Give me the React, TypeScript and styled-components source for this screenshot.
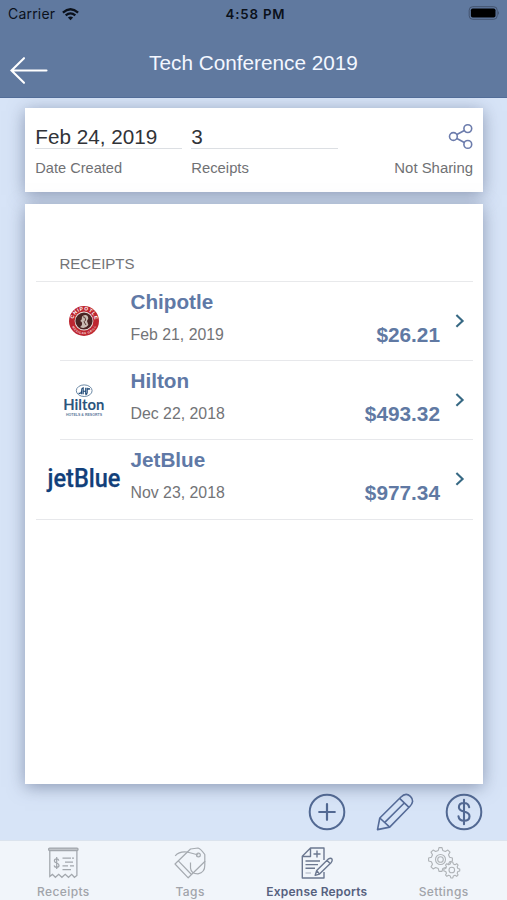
import React from 'react';
import styled, { createGlobalStyle } from 'styled-components';

const GlobalStyle = createGlobalStyle`
  * { box-sizing: border-box; }
  html, body, #root { height: 100%; margin: 0; }
  body { overflow: hidden; font-family: "Liberation Sans", Arial, sans-serif; }
  svg { display: block; flex: none; overflow: visible; }
`;

const Screen = styled.div`
  width: 507px;
  height: 900px;
  display: flex;
  flex-direction: column;
  background: #d7e4f7;
`;

const Header = styled.header`
  height: 98px;
  flex: none;
  background: #60799f;
  border-bottom: 1px solid #526d98;
`;

const StatusBar = styled.div`
  height: 28px;
  padding: 0 7px 0 8px;
  display: grid;
  grid-template-columns: 1fr auto 1fr;
  align-items: center;
  font: 400 14px/28px Inter, sans-serif;
  color: #0b111b;
`;

const Carrier = styled.div`
  display: flex;
  align-items: center;
  gap: 7px;
  letter-spacing: 0.2px;
`;

const Clock = styled.div`
  font-size: 13.3px;
  font-weight: 600;
  letter-spacing: 0.8px;
  padding-left: 3px;
`;

const Battery = styled.div`
  justify-self: end;
  padding-bottom: 2px;
`;

const TitleBar = styled.div`
  height: 69px;
  display: grid;
  grid-template-columns: 48px 1fr 48px;
`;

const BackButton = styled.button`
  align-self: start;
  border: 0;
  padding: 28px 0 0 10px;
  background: none;
  display: block;
`;

const Title = styled.h1`
  margin: 0;
  padding-top: 23px;
  text-align: center;
  font-size: 20.75px;
  line-height: 24px;
  font-weight: 400;
  color: #f3f7ff;
`;

const Main = styled.main`
  flex: 1;
  padding: 10px 24px 0 25px;
  display: flex;
  flex-direction: column;
  overflow: hidden;
`;

const Card = styled.section`
  background: #fff;
  box-shadow: 0 3px 16px rgba(78, 91, 124, 0.55);
`;

const SummaryCard = styled(Card)`
  height: 84px;
  flex: none;
  margin-bottom: 12px;
  padding: 15px 10px 0;
  display: flex;
`;

const Field = styled.div<{ $gap: number }>`
  width: 147px;
  margin-right: ${(p) => p.$gap}px;
`;

const FieldValue = styled.div`
  height: 26px;
  padding-left: 0.3px;
  font-size: 20.7px;
  line-height: 28px;
  color: #313338;
  border-bottom: 1px solid #dcdfe3;
`;

const FieldLabel = styled.div<{ $size?: number }>`
  padding: 9px 0 0 0.3px;
  font-size: ${(p) => p.$size ?? 14.6}px;
  line-height: 20px;
  white-space: nowrap;
  color: #707174;
`;

const Sharing = styled.div`
  flex: 1;
  display: flex;
  flex-direction: column;
  align-items: flex-end;

  svg { height: 26px; }
`;

const ReceiptsCard = styled(Card)`
  position: relative;
  height: 580px;
  flex: none;
  padding: 49px 10px 0 11px;
`;

const SectionTitle = styled.h2`
  margin: 0;
  height: 29px;
  padding-left: 23.5px;
  border-bottom: 1px solid #e8e9eb;
  font-size: 15px;
  line-height: 21px;
  font-weight: 400;
  color: #737477;
`;

const ReceiptRow = styled.div`
  height: 79.2px;
  display: grid;
  grid-template-columns: 94.5px 1fr auto 33px;
`;

const Logo = styled.div`
  padding-left: 11px;
`;

const Details = styled.div`
  padding-top: 8px;
`;

const Merchant = styled.div`
  font-size: 20.7px;
  line-height: 24px;
  font-weight: 700;
  color: #6079a6;
`;

const ReceiptDate = styled.div`
  padding-top: 10.7px;
  font-size: 15.85px;
  line-height: 20px;
  color: #737477;
`;

const Amount = styled.div`
  padding-top: 41px;
  font-size: 20.8px;
  line-height: 24px;
  font-weight: 700;
  color: #6079a3;
`;

const Chevron = styled.div`
  padding: 31px 0 0 15px;
`;

const Divider = styled.hr<{ $inset: number }>`
  border: 0;
  height: 1px;
  margin: -1px 0 0 ${(p) => p.$inset}px;
  background: #e7e8eb;
`;

const Actions = styled.div`
  height: 57px;
  display: flex;
  justify-content: flex-end;
  gap: 31px;
  padding-top: 9px;
`;

const TabBar = styled.nav`
  height: 60px;
  flex: none;
  display: grid;
  grid-template-columns: repeat(4, 1fr);
  background: #f1f5fa;
  border-top: 1px solid #dbe3ed;
`;

const Tab = styled.div<{ $active?: boolean }>`
  display: flex;
  flex-direction: column;
  align-items: center;
  padding-top: 5px;
  white-space: nowrap;
  font: ${(p) => (p.$active ? 600 : 500)} 12px/16px Inter, sans-serif;
  letter-spacing: ${(p) => (p.$active ? 0.2 : 0.4)}px;
  color: ${(p) => (p.$active ? '#56617f' : '#a1a4aa')};

  svg { margin-bottom: 4px; }
`;

const WifiIcon = () => (
  <svg width="17" height="13" viewBox="0 0 17 13" fill="none" stroke="currentColor" strokeWidth="2.3">
    <path d="M.9 4.6Q8.5-2 16.1 4.6M3.7 7.4Q8.5 3.3 13.3 7.4" />
    <path d="M8.5 12.2 5.9 9.5Q8.5 7.4 11.1 9.5Z" fill="currentColor" stroke="none" />
  </svg>
);

const BatteryIcon = () => (
  <svg width="32" height="14" viewBox="0 0 32 14">
    <rect x="1.2" y=".7" width="28" height="12.6" rx="3.5" fill="none" stroke="#43536e" />
    <rect x="2.9" y="2.5" width="24.6" height="9" rx="1.8" fill="#000" />
    <path d="M30.2 4.8Q31.8 7 30.2 9.2Z" fill="#38475f" />
  </svg>
);

const BackIcon = () => (
  <svg width="38" height="28" viewBox="0 0 38 28" fill="none" stroke="#fff" strokeWidth="2.1" strokeLinecap="round">
    <path d="M14 2.2 1.5 14.5 14 26.8M2 14.5H36.5" />
  </svg>
);

const ShareIcon = () => (
  <svg width="24" height="26" viewBox="0 0 24 26" fill="none" stroke="#6c7cac" strokeWidth="1.6">
    <circle cx="4.4" cy="13.5" r="3.9" />
    <circle cx="18.8" cy="5.6" r="3.9" />
    <circle cx="18.8" cy="21.4" r="3.9" />
    <path d="M7.9 11.5 15.3 7.5M7.9 15.5 15.3 19.5" />
  </svg>
);

const ChevronIcon = () => (
  <svg width="10" height="16" viewBox="0 0 10 16" fill="none" stroke="#376984" strokeWidth="2.1">
    <path d="M1.4 2 7.6 7.9 1.4 13.8" />
  </svg>
);

const ChipotleLogo = () => (
  <svg width="75" height="79" viewBox="0 0 75 79">
    <defs>
      <path id="chipotle-top" d="M26.3 39A10.7 10.7 0 0 1 47.7 39" />
      <path id="chipotle-bottom" d="M23.7 39A13.3 13.3 0 0 0 50.3 39" />
    </defs>
    <circle cx="37" cy="39" r="15" fill="#bd2630" />
    <circle cx="37" cy="39" r="9.4" fill="#eee4df" />
    <circle cx="37" cy="39" r="8.6" fill="#4a2423" />
    <path d="M33 45Q36 43 34.7 40L33.2 38.9 34.8 37.2Q34.4 33.5 38 33.1 41 33 41.3 36.5L40 39 41.4 43Q38 47.5 33 45Z" fill="#c9bbb2" />
    <path d="M36 34.8Q38.6 34.5 38.7 38L37 39.8 39 43" fill="none" stroke="#5d3b36" strokeWidth="1" />
    <text fontSize="5" fontWeight="700" fill="#fff" fontFamily="Liberation Sans, sans-serif">
      <textPath href="#chipotle-top" startOffset="2" textLength="30">CHIPOTLE</textPath>
    </text>
    <text fontSize="3" fontWeight="700" fill="#f7dfdf" fontFamily="Liberation Sans, sans-serif">
      <textPath href="#chipotle-bottom" startOffset="6" textLength="30">MEXICAN GRILL</textPath>
    </text>
  </svg>
);

const HiltonLogo = () => (
  <svg width="75" height="79" viewBox="0 0 75 79">
    <ellipse cx="37.2" cy="29.7" rx="7.9" ry="5.8" fill="none" stroke="#6d8aa6" strokeWidth="1" />
    <path d="M34.7 33.2V28.6Q34.7 26.9 36.2 26.7V33.2M36.3 30.2H38.6M38.7 33V26.8M40.2 26.8V31.8Q40.2 33.4 38.4 33.6M31.6 32Q33.4 33.3 34.4 30.6M40.8 28.6Q42.2 26.6 42.8 28.6" fill="none" stroke="#1f4a78" strokeWidth="1.1" />
    <text x="16.3" y="48.9" textLength="41" lengthAdjust="spacingAndGlyphs" fontFamily="Lato, sans-serif" fontWeight="700" fontSize="15.2" fill="#2b547d">Hilton</text>
    <text x="19" y="54.8" textLength="36" lengthAdjust="spacingAndGlyphs" fontFamily="Liberation Sans, sans-serif" fontWeight="700" fontSize="3.4" fill="#5c789b">HOTELS &amp; RESORTS</text>
  </svg>
);

const JetBlueLogo = () => (
  <svg width="75" height="79" viewBox="0 0 75 79">
    <text x="0.5" y="46.5" textLength="73" lengthAdjust="spacingAndGlyphs" fontFamily="Roboto, sans-serif" fontWeight="500" fontSize="26" fill="#123f7a" stroke="#123f7a" strokeWidth="0.25">jetBlue</text>
  </svg>
);

const AddIcon = () => (
  <svg width="38" height="38" viewBox="0 0 38 38" fill="none" stroke="#526993" strokeWidth="2">
    <circle cx="20" cy="19" r="17.3" />
    <path d="M12.2 19H27.8M20 11.2V26.8" strokeWidth="2.2" strokeLinecap="round" />
  </svg>
);

const EditIcon = () => (
  <svg width="38" height="38" viewBox="0 0 38 38" fill="none" stroke="#556b98" strokeWidth="1.6" strokeLinejoin="round">
    <path d="M1.5 36.6 3.8 25 24.7 4.3C28 .9 31.2.3 34.4 3.4 37.8 6.6 37.1 10.2 33.8 13.5L13.7 34.1Z" />
    <path d="M3.8 25 13.7 34.1M8.8 29.4 28 10.2M23.6 5.4 33 14.3" />
  </svg>
);

const DollarIcon = () => (
  <svg width="38" height="38" viewBox="0 0 38 38" fill="none" stroke="#526993" strokeWidth="2">
    <circle cx="19" cy="19" r="17.3" />
    <path d="M24.2 14.2C23.6 11.3 21.8 10 19 10 15.7 10 13.9 11.7 13.9 14.2 13.9 20.3 24.5 16.8 24.5 23.2 24.5 26.2 22.3 27.8 19 27.8 15.9 27.8 13.9 26.3 13.5 23.4M19 6.7V31.3" strokeWidth="2.1" strokeLinecap="round" />
  </svg>
);

const ReceiptIcon = () => (
  <svg width="32" height="34" viewBox="0 0 32 34" fill="none" stroke="#a2a7ad" strokeWidth="1.25">
    <rect x="1.6" y="2" width="29.4" height="2.6" rx="1" fill="#c0c4c9" />
    <path d="M2.8 5V30.5L5.4 28.4 8.4 31.3 11.7 28.4 14.9 31.3 18.2 28.4 21.5 31.3 24.7 28.4 27.4 31.3 29.9 29.5V5" />
    <path d="M11.8 14.6C11.3 12.4 7.4 12.4 7.4 14.9 7.4 17.6 12 16.4 12 19.2 12 21.9 7.7 21.9 7.1 19.5M9.7 11V23M15.5 12.2H24M25 12.2H27M18 16H26M15.5 19.8H21M23 19.8H27M15.5 23.5H24" />
  </svg>
);

const TagsIcon = () => (
  <svg width="32" height="34" viewBox="0 0 32 34" fill="none" stroke="#a5aab0" strokeWidth="1.2" strokeLinejoin="round">
    <path d="M1 18 16.5 3 24 2Q27 3 30.8 8.5V15.5L14.2 31.8Z" />
    <path d="M4.3 14.8 17.5 28.5M1.2 9.8Q5.5 5 13 6 19 7.5 24.3 9M16.5 16.5V22Q17 27.8 24 27.8 31 26.5 30.8 19V15" />
    <circle cx="24.4" cy="9" r="1.9" />
  </svg>
);

const ReportsIcon = () => (
  <svg width="32" height="34" viewBox="0 0 32 34" fill="none" stroke="#6c7890" strokeWidth="1.4" strokeLinejoin="round">
    <path d="M23 14V2H9.5L1.3 10.2V32H23V26M1.5 10.5H9.5V2M16 4.5V11.5M12.5 8H19.5M4.5 15H19M4.5 18.6H17M4.5 22.2H14" />
    <path d="M14.2 29.3 15.7 24.5 27.6 12.8Q29.8 11.4 31.1 13.2 31.5 15 30.3 16.4L18.5 28.1ZM15.7 24.5 18.5 28.1M26 14.2 29 17.5" />
    <path d="M4.5 27H10" opacity=".4" />
  </svg>
);

const gearPath = (cx: number, cy: number, radius: number, teeth: number) => {
  const points: string[] = [];
  for (let i = 0; i < teeth; i += 1) {
    [[-0.31, 0.78], [-0.16, 1], [0.16, 1], [0.31, 0.78]].forEach(([offset, scale]) => {
      const angle = ((i + offset) / teeth) * Math.PI * 2 - Math.PI / 2;
      points.push(`${cx + Math.cos(angle) * radius * scale},${cy + Math.sin(angle) * radius * scale}`);
    });
  }
  return `M${points.join('L')}Z`;
};

const SettingsIcon = () => (
  <svg width="32" height="34" viewBox="0 0 32 34" fill="none" stroke="#afb3b7" strokeWidth="1.1" strokeLinejoin="round">
    <path d={gearPath(12.5, 13.5, 12, 8)} />
    <circle cx="12.5" cy="13.5" r="5" />
    <circle cx="12.5" cy="13.5" r="2.8" />
    <path d={gearPath(23.8, 24, 8, 8)} fill="#f1f5fa" />
    <circle cx="23.8" cy="24" r="2.8" />
  </svg>
);

const receipts = [
  { name: 'Chipotle', date: 'Feb 21, 2019', amount: '$26.21', logo: <ChipotleLogo /> },
  { name: 'Hilton', date: 'Dec 22, 2018', amount: '$493.32', logo: <HiltonLogo /> },
  { name: 'JetBlue', date: 'Nov 23, 2018', amount: '$977.34', logo: <JetBlueLogo /> },
];

export default function App() {
  return (
    <Screen>
      <GlobalStyle />
      <Header>
        <StatusBar>
          <Carrier>Carrier <WifiIcon /></Carrier>
          <Clock>4:58 PM</Clock>
          <Battery><BatteryIcon /></Battery>
        </StatusBar>
        <TitleBar>
          <BackButton aria-label="Back"><BackIcon /></BackButton>
          <Title>Tech Conference 2019</Title>
        </TitleBar>
      </Header>
      <Main>
        <SummaryCard>
          <Field $gap={9}>
            <FieldValue>Feb 24, 2019</FieldValue>
            <FieldLabel>Date Created</FieldLabel>
          </Field>
          <Field $gap={0}>
            <FieldValue>3</FieldValue>
            <FieldLabel $size={14.8}>Receipts</FieldLabel>
          </Field>
          <Sharing>
            <ShareIcon />
            <FieldLabel $size={14.9}>Not Sharing</FieldLabel>
          </Sharing>
        </SummaryCard>
        <ReceiptsCard>
          <SectionTitle>RECEIPTS</SectionTitle>
          {receipts.map((receipt, i) => (
            <React.Fragment key={receipt.name}>
              <ReceiptRow>
                <Logo>{receipt.logo}</Logo>
                <Details>
                  <Merchant>{receipt.name}</Merchant>
                  <ReceiptDate>{receipt.date}</ReceiptDate>
                </Details>
                <Amount>{receipt.amount}</Amount>
                <Chevron><ChevronIcon /></Chevron>
              </ReceiptRow>
              <Divider $inset={i === receipts.length - 1 ? 0 : 24} />
            </React.Fragment>
          ))}
        </ReceiptsCard>
        <Actions>
          <AddIcon />
          <EditIcon />
          <DollarIcon />
        </Actions>
      </Main>
      <TabBar>
        <Tab><ReceiptIcon />Receipts</Tab>
        <Tab><TagsIcon />Tags</Tab>
        <Tab $active><ReportsIcon />Expense Reports</Tab>
        <Tab><SettingsIcon />Settings</Tab>
      </TabBar>
    </Screen>
  );
}
